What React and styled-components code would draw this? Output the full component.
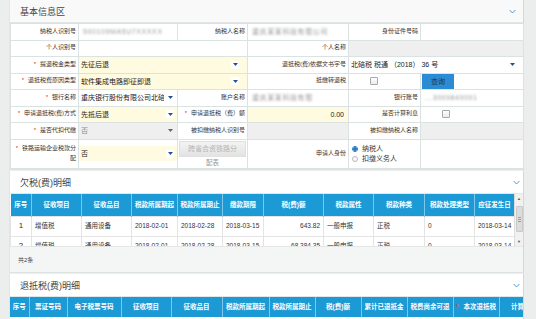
import React from "react";
import styled, { createGlobalStyle } from "styled-components";

const GlobalStyle = createGlobalStyle`
  html, body { margin: 0; padding: 0; }
  body {
    background: #eceeee;
    font-family: "Liberation Sans", "Noto Sans CJK SC", sans-serif;
    color: #333;
    overflow: hidden;
  }
  * { box-sizing: border-box; }
`;

const Page = styled.div`
  width: 536px;
  height: 319px;
  overflow: hidden;
  padding: 0 13px 0 10px;
  display: flex;
  flex-direction: column;
  gap: 1px;
`;

const Panel = styled.section`
  flex: none;
  background: #fff;
  box-shadow: 1px 0 0 #d2d8d8, -1px 0 0 #e0e5e5;
  border-bottom: 1px solid #dde3e3;
`;

const PanelHeader = styled.div`
  height: ${(p) => p.$h}px;
  display: flex;
  align-items: center;
  justify-content: space-between;
  padding: 0 ${(p) => p.$pr}px 0 10px;
  background: ${(p) => p.$bg || "#fff"};
  border-bottom: 1px solid #e1e6e6;
  font-size: 9px;
  color: #444;
`;

const FormTable = styled.table`
  width: 513px;
  border-collapse: collapse;
  table-layout: fixed;
  font-size: 7px;
  line-height: 1;
`;

const Row = styled.tr`
  height: ${(p) => p.$h || 16.5}px;
`;

const Label = styled.td`
  border: 1px solid #dae3e1;
  text-align: right;
  padding: 0 2px 0 3px;
  font-size: 6px;
  line-height: 1.6;
  color: #333;
  background: #fff;
  vertical-align: middle;
  white-space: ${(p) => (p.$wrap ? "normal" : "nowrap")};
  overflow: hidden;
`;

const Star = styled.span`
  color: #e02424;
  margin-right: 4px;
  font-size: 6px;
`;

const Value = styled.td`
  border: 1px solid #dae3e1;
  padding: 0;
  font-size: 7px;
  line-height: 1;
  background: ${(p) =>
    p.$tone === "yellow" ? "#fffbe0" : p.$tone === "gray" ? "#efefef" : "#fff"};
  vertical-align: middle;
  overflow: hidden;
`;

const Field = styled.div`
  height: ${(p) => p.$h || 15}px;
  display: flex;
  align-items: center;
  gap: 2px;
  padding: 0 ${(p) => (p.$pr === undefined ? 4 : p.$pr)}px 0 2px;
  background: ${(p) =>
    p.$tone === "yellow" ? "#fffbe0" : p.$tone === "gray" ? "#efefef" : "transparent"};
  font-size: 7px;
  color: ${(p) => (p.$muted ? "#8a8a8a" : "#222")};
  white-space: nowrap;
  overflow: hidden;
`;

const FieldText = styled.span`
  flex: 1;
  min-width: 0;
  overflow: hidden;
  text-align: ${(p) => p.$align || "left"};
`;

const ArrowBox = styled.span`
  flex: none;
  width: 8px;
  height: 8px;
  display: flex;
  align-items: center;
  justify-content: center;
  background: ${(p) => (p.$plain ? "transparent" : "#fff")};
`;

const Blurred = styled.span`
  display: block;
  color: #9a9a9a;
  filter: blur(0.9px);
  font-size: 7px;
  letter-spacing: 0.6px;
  padding-left: 4px;
  white-space: nowrap;
`;

const CheckCell = styled.div`
  height: 15px;
  display: flex;
  align-items: center;
  padding-left: 21px;
`;

const Check = styled.span`
  display: block;
  width: 8px;
  height: 8px;
  border: 1px solid #a9a9a9;
  border-radius: 1px;
  background: linear-gradient(#fdfdfd, #ececec);
`;

const QueryButton = styled.button`
  width: 32px;
  height: 15px;
  margin-left: 1px;
  border: none;
  padding: 0;
  background: #2b8bd3;
  color: #1e3756;
  font-family: inherit;
  font-size: 7px;
  display: block;
`;

const DisabledCell = styled.div`
  display: flex;
  flex-direction: column;
  align-items: center;
  gap: 1px;
  padding: 1px 1px 0;
`;

const DisabledButton = styled.div`
  width: 100%;
  height: 16px;
  display: flex;
  align-items: center;
  justify-content: center;
  background: linear-gradient(#f3f3f3, #e3e3e3);
  border: 1px solid #e0e0e0;
  color: #b5b5b5;
  font-size: 7px;
  white-space: nowrap;
  overflow: hidden;
`;

const Caption = styled.span`
  color: #999;
  font-size: 6.5px;
  line-height: 10px;
`;

const RadioGroup = styled.div`
  display: flex;
  flex-direction: column;
  gap: 3px;
  padding-left: 3px;
`;

const RadioItem = styled.label`
  display: flex;
  align-items: center;
  gap: 4px;
  font-size: 7px;
  color: #333;
`;

const RadioDot = styled.span`
  width: 6px;
  height: 6px;
  border-radius: 50%;
  border: 1px solid ${(p) => (p.$on ? "#2f7fc4" : "#b8b8b8")};
  background: ${(p) =>
    p.$on ? "radial-gradient(circle, #2f7fc4 0 1.6px, #fff 1.8px)" : "#fafafa"};
`;

const TableArea = styled.div`
  display: flex;
  height: 52px;
  overflow: hidden;
`;

const TableClip = styled.div`
  width: ${(p) => p.$w}px;
  height: ${(p) => p.$h}px;
  overflow: hidden;
  flex: none;
`;

const GridTable = styled.table`
  width: ${(p) => p.$w}px;
  border-collapse: collapse;
  table-layout: fixed;
  font-size: 7px;
  line-height: 1;
`;

const Th = styled.th`
  height: ${(p) => p.$h || 22}px;
  background: #1c9ad6;
  color: #fff;
  font-size: 6.5px;
  font-weight: bold;
  text-align: center;
  white-space: nowrap;
  overflow: hidden;
  padding: 0 1px;
  border-right: 1px solid #7fc6ea;
`;

const StarTh = styled.span`
  color: #ff3a3a;
  margin-right: 5px;
`;

const Td = styled.td`
  height: 20px;
  font-size: ${(p) => (p.$big ? 8 : 6.5)}px;
  color: #333;
  border: 1px solid #e4e4e4;
  padding: 0 3px;
  text-align: ${(p) => p.$align || "left"};
  white-space: nowrap;
  overflow: hidden;
`;

const Scrollbar = styled.div`
  width: 9px;
  flex: none;
  background: #f1f1f1;
  border-left: 1px solid #dcdcdc;
  display: flex;
  flex-direction: column;
  align-items: center;
  padding: 2px 0;
  gap: 3px;
`;

const ScrollThumb = styled.div`
  width: 7px;
  height: 26px;
  margin-top: 2px;
  background: #dcdcdc;
  border: 1px solid #c9c9c9;
  border-radius: 1px;
  display: flex;
  flex-direction: column;
  justify-content: center;
  align-items: center;
  gap: 1px;
`;

const Grip = styled.span`
  width: 3px;
  height: 1px;
  background: #9d9d9d;
`;

const ScrollArrow = styled.span`
  font-size: 4px;
  line-height: 5px;
  color: #555;
  margin-top: ${(p) => (p.$down ? "auto" : "0")};
`;

const Footer = styled.div`
  height: 26px;
  background: #f4f5f5;
  display: flex;
  align-items: center;
  padding-left: 8px;
  font-size: 6px;
  color: #444;
  border-top: 1px solid #e6e6e6;
`;

const BottomLine = styled.div`
  height: 4px;
  border-top: 2px solid #fff;
  background: #cfe8de;
`;

const Chevron = () => (
  <svg width="7" height="5" viewBox="0 0 7 5">
    <polyline points="0.6,1 3.5,4 6.4,1" fill="none" stroke="#3d8fd2" strokeWidth="0.9" />
  </svg>
);

const Caret = ({ color = "#2a4f8f" }) => (
  <svg width="5" height="3" viewBox="0 0 5 3">
    <polygon points="0,0 5,0 2.5,3" fill={color} />
  </svg>
);

const Select = ({ text, tone, muted, plain, h, pr }) => (
  <Field $tone={tone} $muted={muted} $h={h} $pr={pr}>
    <FieldText>{text}</FieldText>
    <ArrowBox $plain={plain}>
      <Caret color={muted ? "#666" : "#2a4f8f"} />
    </ArrowBox>
  </Field>
);

const L = ({ star, children, ...rest }) => (
  <Label {...rest}>
    {star && <Star>*</Star>}
    {children}
  </Label>
);

const arrearsCols = [21, 50, 50, 46, 45, 41, 60, 50, 51, 50, 40];
const arrearsHead = [
  "序号", "征收项目", "征收品目", "税款所属期起", "税款所属期止", "缴款期限",
  "税(费)额", "税款属性", "税款种类", "税款处理类型", "应征发生日",
];
const arrearsRows = [
  ["1", "增值税", "通用设备", "2018-02-01", "2018-02-28", "2018-03-15", "643.82", "一般申报", "正税", "0", "2018-03-14"],
  ["2", "增值税", "通用设备", "2018-02-01", "2018-02-28", "2018-03-15", "68,384.35", "一般申报", "正税", "0", "2018-03-14"],
];

const refundCols = [19, 38, 54, 50, 51, 47, 46, 46, 46, 46, 46, 50];
const refundHead = [
  "序号", "票证号码", "电子税票号码", "征收项目", "征收品目", "税款所属期起",
  "税款所属期止", "税(费)额", "累计已退抵金", "税费尚余可退", "本次退抵税", "计算利息",
];

export default function App() {
  const cols = [68, 99, 70, 101, 72, 103];
  return (
    <>
      <GlobalStyle />
      <Page>
        <Panel>
          <PanelHeader $h={23} $pr={7} $bg="#f9f9f9">
            <span>基本信息区</span>
            <Chevron />
          </PanelHeader>
          <FormTable>
            <colgroup>
              {cols.map((w, i) => (
                <col key={i} style={{ width: w }} />
              ))}
            </colgroup>
            <tbody>
              <Row>
                <L>纳税人识别号</L>
                <Value><Blurred>500109MA5U7XXXXX</Blurred></Value>
                <L>纳税人名称</L>
                <Value><Blurred>重庆某某科技有限公司</Blurred></Value>
                <L>身份证件号码</L>
                <Value />
              </Row>
              <Row>
                <L>个人识别号</L>
                <Value colSpan={2} />
                <L>个人名称</L>
                <Value colSpan={2} $tone="gray" />
              </Row>
              <Row>
                <L star>提退税金类型</L>
                <Value colSpan={2} $tone="yellow">
                  <Select text="先征后退" pr={8} />
                </Value>
                <L>退抵税(费)依据文书字号</L>
                <Value colSpan={2}>
                  <Select text="北碚税 税通 （2018） 36 号" plain pr={7} />
                </Value>
              </Row>
              <Row>
                <L star>退抵税费原因类型</L>
                <Value colSpan={2} $tone="yellow">
                  <Select text="软件集成电路即征即退" pr={8} />
                </Value>
                <L>抵缴转退税</L>
                <Value><CheckCell><Check /></CheckCell></Value>
                <Value><QueryButton>查询</QueryButton></Value>
              </Row>
              <Row>
                <L star>银行名称</L>
                <Value>
                  <Select text="重庆银行股份有限公司北碚支行" pr={3} />
                </Value>
                <L>账户名称</L>
                <Value><Blurred>重庆某某科技有限</Blurred></Value>
                <L>银行账号</L>
                <Value><Blurred>...3009840001</Blurred></Value>
              </Row>
              <Row>
                <L star>申请退抵税(费)方式</L>
                <Value $tone="yellow">
                  <Select text="先抵后退" pr={3} />
                </Value>
                <L star>申请退抵税（费）额</L>
                <Value $tone="yellow">
                  <Field>
                    <FieldText $align="right">0.00</FieldText>
                  </Field>
                </Value>
                <L>是否计算利息</L>
                <Value><CheckCell><Check /></CheckCell></Value>
              </Row>
              <Row>
                <L star>是否代扣代缴</L>
                <Value $tone="gray">
                  <Select text="否" muted plain pr={3} />
                </Value>
                <L>被扣缴纳税人识别号</L>
                <Value $tone="gray" />
                <L>被扣缴纳税人名称</L>
                <Value $tone="gray" />
              </Row>
              <Row $h={29.5}>
                <L star $wrap>铁路运输企业税款分配</L>
                <Value>
                  <Select text="否" tone="yellow" pr={3} />
                </Value>
                <Value>
                  <DisabledCell>
                    <DisabledButton>跨省合资铁路分</DisabledButton>
                    <Caption>配表</Caption>
                  </DisabledCell>
                </Value>
                <L>申请人身份</L>
                <Value>
                  <RadioGroup>
                    <RadioItem><RadioDot $on />纳税人</RadioItem>
                    <RadioItem><RadioDot />扣缴义务人</RadioItem>
                  </RadioGroup>
                </Value>
                <Value />
              </Row>
            </tbody>
          </FormTable>
        </Panel>

        <Panel>
          <PanelHeader $h={23} $pr={3}>
            <span>欠税(费)明细</span>
            <Chevron />
          </PanelHeader>
          <TableArea>
            <TableClip $w={504} $h={52}>
              <GridTable $w={504}>
                <colgroup>
                  {arrearsCols.map((w, i) => (
                    <col key={i} style={{ width: w }} />
                  ))}
                </colgroup>
                <thead>
                  <tr>
                    {arrearsHead.map((h) => (
                      <Th key={h}>{h}</Th>
                    ))}
                  </tr>
                </thead>
                <tbody>
                  {arrearsRows.map((r) => (
                    <tr key={r[0]}>
                      <Td $align="center" $big>{r[0]}</Td>
                      <Td>{r[1]}</Td>
                      <Td>{r[2]}</Td>
                      <Td>{r[3]}</Td>
                      <Td>{r[4]}</Td>
                      <Td>{r[5]}</Td>
                      <Td $align="right">{r[6]}</Td>
                      <Td>{r[7]}</Td>
                      <Td>{r[8]}</Td>
                      <Td>{r[9]}</Td>
                      <Td>{r[10]}</Td>
                    </tr>
                  ))}
                </tbody>
              </GridTable>
            </TableClip>
            <Scrollbar>
              <ScrollArrow>▲</ScrollArrow>
              <ScrollThumb>
                <Grip />
                <Grip />
                <Grip />
              </ScrollThumb>
              <ScrollArrow $down>▼</ScrollArrow>
            </Scrollbar>
          </TableArea>
          <Footer>共2条</Footer>
        </Panel>

        <Panel>
          <PanelHeader $h={23} $pr={3}>
            <span>退抵税(费)明细</span>
            <Chevron />
          </PanelHeader>
          <TableClip $w={513} $h={20}>
            <GridTable $w={539}>
              <colgroup>
                {refundCols.map((w, i) => (
                  <col key={i} style={{ width: w }} />
                ))}
              </colgroup>
              <thead>
                <tr>
                  {refundHead.map((h) => (
                    <Th key={h} $h={20}>
                      {h === "本次退抵税" && <StarTh>*</StarTh>}
                      {h}
                    </Th>
                  ))}
                </tr>
              </thead>
            </GridTable>
          </TableClip>
          <BottomLine />
        </Panel>
      </Page>
    </>
  );
}
